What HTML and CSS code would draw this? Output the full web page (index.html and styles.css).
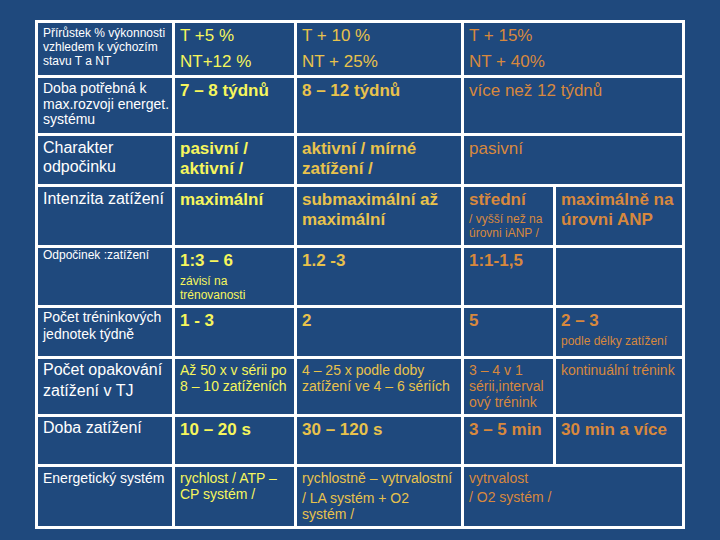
FILE: index.html
```html
<!DOCTYPE html>
<html lang="cs">
<head>
<meta charset="utf-8">
<link rel="stylesheet" href="styles.css">
</head>
<body>
<div class="sheet">
  <!-- row 1 -->
  <div class="cell"><div class="l12">Přírůstek % výkonnosti vzhledem k výchozím stavu T a NT</div></div>
  <div class="cell c2"><div class="big">T +5 %</div><div class="big g6">NT+12 %</div></div>
  <div class="cell c3"><div class="big">T + 10 %</div><div class="big g6">NT + 25%</div></div>
  <div class="cell c4 span2"><div class="big">T + 15%</div><div class="big g6">NT + 40%</div></div>
  <!-- row 2 -->
  <div class="cell"><div class="l14 lh155">Doba potřebná k<br>max.rozvoji energet.<br>systému</div></div>
  <div class="cell c2"><div class="big b">7 – 8 týdnů</div></div>
  <div class="cell c3"><div class="big b">8 – 12 týdnů</div></div>
  <div class="cell c4 span2"><div class="big">více než 12 týdnů</div></div>
  <!-- row 3 -->
  <div class="cell"><div class="l16 lh185">Charakter<br>odpočinku</div></div>
  <div class="cell c2"><div class="big b">pasivní /<br>aktivní /</div></div>
  <div class="cell c3"><div class="big b">aktivní / mírné<br>zatížení /</div></div>
  <div class="cell c4 span2"><div class="big">pasivní</div></div>
  <!-- row 4 -->
  <div class="cell"><div class="l16 up1">Intenzita zatížení</div></div>
  <div class="cell c2"><div class="big b">maximální</div></div>
  <div class="cell c3"><div class="big b lh21">submaximální až<br>maximální</div></div>
  <div class="cell c4"><div class="big b">střední</div><div class="sm g2">/ vyšší než na<br>úrovni iANP /</div></div>
  <div class="cell c5"><div class="big b lh21">maximálně na<br>úrovni ANP</div></div>
  <!-- row 5 -->
  <div class="cell"><div class="l12 up3">Odpočinek :zatížení</div></div>
  <div class="cell c2"><div class="big b">1:3 – 6</div><div class="sm g3">závisí na<br>trénovanosti</div></div>
  <div class="cell c3"><div class="big b">1.2 -3</div></div>
  <div class="cell c4"><div class="big b">1:1-1,5</div></div>
  <div class="cell c5"></div>
  <!-- row 6 -->
  <div class="cell"><div class="l14 lh165 up2">Počet tréninkových<br>jednotek týdně</div></div>
  <div class="cell c2"><div class="big b">1 - 3</div></div>
  <div class="cell c3"><div class="big b">2</div></div>
  <div class="cell c4"><div class="big b">5</div></div>
  <div class="cell c5"><div class="big b">2 – 3</div><div class="sm g3">podle délky zatížení</div></div>
  <!-- row 7 -->
  <div class="cell"><div class="l16 lh205 up2">Počet opakování<br>zatížení v TJ</div></div>
  <div class="cell c2"><div class="t14">Až 50 x v sérii po<br>8 – 10 zatíženích</div></div>
  <div class="cell c3"><div class="t14">4 – 25 x podle doby<br>zatížení ve 4 – 6 sériích</div></div>
  <div class="cell c4"><div class="t14">3 – 4 v 1<br>sérii,interval<br>ový trénink</div></div>
  <div class="cell c5"><div class="t14">kontinuální trénink</div></div>
  <!-- row 8 -->
  <div class="cell"><div class="l16 up2">Doba zatížení</div></div>
  <div class="cell c2"><div class="big b">10 – 20 s</div></div>
  <div class="cell c3"><div class="big b">30 – 120 s</div></div>
  <div class="cell c4"><div class="big b">3 – 5 min</div></div>
  <div class="cell c5"><div class="big b">30 min a více</div></div>
  <!-- row 9 -->
  <div class="cell"><div class="l14">Energetický systém</div></div>
  <div class="cell c2"><div class="t14 lh17">rychlost / ATP –<br>CP systém /</div></div>
  <div class="cell c3"><div class="t14">rychlostně – vytrvalostní</div><div class="t14 g4">/ LA systém + O2<br>systém /</div></div>
  <div class="cell c4 span2"><div class="t14">vytrvalost</div><div class="t14 g3">/ O2 systém /</div></div>
</div>
</body>
</html>
```
FILE: styles.css
```css
html, body {
  margin: 0;
  padding: 0;
}
body {
  background: #1f497d;
  width: 720px;
  height: 540px;
  overflow: hidden;
  font-family: "Liberation Sans", Arial, sans-serif;
  color: #ffffff;
}
.sheet {
  margin: 20px 0 0 35px;
  width: 650px;
  box-sizing: border-box;
  display: grid;
  grid-template-columns: 134px 119px 164px 89px 126px;
  grid-template-rows: 52px 55px 48px 58px 57px 48px 55px 47px 59px;
  gap: 3px;
  padding: 3px;
  background: #ffffff;
}
.cell {
  background: #1f497d;
  padding: 3px 0 0 5px;
  overflow: hidden;
  white-space: nowrap;
}
.cell:first-child { white-space: normal; }
.span2 { grid-column: span 2; }
.c2 { color: #f6f65c; }
.c3 { color: #e8c24c; }
.c4, .c5 { color: #d7883d; }

.l12 { font-size: 12px; line-height: 14px; }
.l14 { font-size: 14px; line-height: 16px; }
.l16 { font-size: 16px; line-height: 19px; }
.lh155 { line-height: 15.5px; }
.lh165 { line-height: 16.5px; }
.lh185 { line-height: 18.5px; }
.lh205 { line-height: 20.5px; }
.lh21 { line-height: 21px; }
.lh17 { line-height: 17px; }

.big { font-size: 17px; line-height: 20px; }
.b { font-weight: bold; }
.sm { font-size: 12px; line-height: 14px; }
.t14 { font-size: 14px; line-height: 16px; }

.g2 { margin-top: 2px; }
.g3 { margin-top: 3px; }
.g4 { margin-top: 4px; }
.g6 { margin-top: 6px; }
.up1 { margin-top: -1px; }
.up2 { margin-top: -2px; }
.up3 { margin-top: -3px; }
```
